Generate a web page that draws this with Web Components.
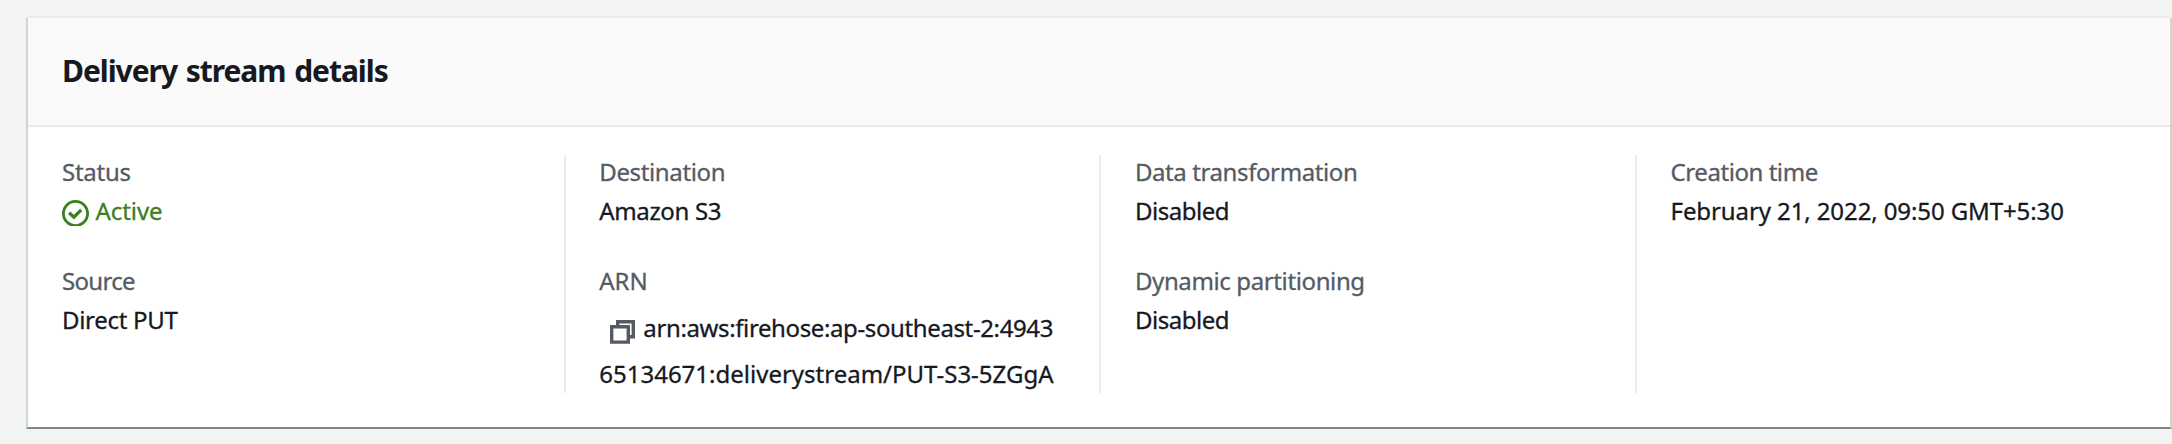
<!DOCTYPE html>
<html lang="en">
<head>
<meta charset="utf-8">
<title>Delivery stream details</title>
<style>
body { margin: 0; height: 444px; overflow: hidden; background: #f2f3f3; font-family: "Noto Sans", sans-serif; color: #16191f; }
</style>
</head>
<body>
<details-panel>
  <span slot="heading">Delivery stream details</span>
  <detail-column>
    <detail-field label="Status" style="--label-ls:-.26px;--value-ls:-.08px"><status-ok>Active</status-ok></detail-field>
    <detail-field label="Source" style="--label-ls:-.7px;--value-ls:-.3px">Direct PUT</detail-field>
  </detail-column>
  <detail-column divided>
    <detail-field label="Destination" style="--label-ls:-.36px;--value-ls:-.35px">Amazon S3</detail-field>
    <detail-field label="ARN"><copy-text first="arn:aws:firehose:ap-southeast-2:4943" rest="65134671:deliverystream/PUT-S3-5ZGgA"></copy-text></detail-field>
  </detail-column>
  <detail-column divided>
    <detail-field label="Data transformation" style="--label-ls:-.4px;--value-ls:-.46px">Disabled</detail-field>
    <detail-field label="Dynamic partitioning" style="--label-ls:-.38px;--value-ls:-.46px">Disabled</detail-field>
  </detail-column>
  <detail-column divided>
    <detail-field label="Creation time" style="--label-ls:-.44px;--value-ls:-.1px">February 21, 2022, 09:50 GMT+5:30</detail-field>
  </detail-column>
</details-panel>
<script>
const define = (name, html, setup) => customElements.define(name, class extends HTMLElement {
  connectedCallback() {
    if (this.shadowRoot) return;
    const root = this.attachShadow({ mode: "open" });
    root.innerHTML = html;
    if (setup) setup(this, root);
  }
});

define("details-panel", `
<style>
:host { display: block; padding: 16px 0 0 26px; }
.top { height: 2px; margin: 0 2px; background: #eaebeb; }
.card { box-sizing: border-box; width: 2146px; height: 411px; border: 2px solid #d0d5d4; border-top: 0; border-bottom-color: #7c8988; background: #fff; }
header { box-sizing: border-box; height: 109px; padding: 0 34px; background: #fafafa; border-bottom: 2px solid #eaeaea; }
h2 { margin: 0; padding-top: 32px; font-size: 30px; line-height: 42px; font-weight: 700; letter-spacing: -1.05px; word-spacing: 2px; }
.grid { display: grid; grid-template-columns: repeat(4, 535.67px); height: 238px; padding-top: 28px; }
</style>
<div class="top"></div>
<section class="card">
  <header><h2><slot name="heading"></slot></h2></header>
  <div class="grid"><slot></slot></div>
</section>`);

define("detail-column", `
<style>
:host { box-sizing: border-box; display: flex; flex-direction: column; gap: 31px; height: 238px; padding-left: 34px; }
:host([divided]) { border-left: 2px solid #eaeaea; padding-left: 33.6px; }
</style><slot></slot>`);

define("detail-field", `
<style>
:host { display: block; font-size: 24px; white-space: nowrap; -webkit-text-stroke: .3px; }
.label { line-height: 33px; color: #545b64; letter-spacing: var(--label-ls, 0); }
.value { line-height: 45px; letter-spacing: var(--value-ls, 0); }
</style>
<div class="label"></div><div class="value"><slot></slot></div>`, (el, root) => {
  root.querySelector(".label").textContent = el.getAttribute("label");
});

define("status-ok", `
<style>
:host { display: flex; color: #3a801f; }
svg { flex: none; margin: 12px 6.5px 0 0; }
</style>
<svg width="27" height="26" viewBox="0 0 27 26" fill="none" stroke="currentColor">
  <circle cx="13.5" cy="13.5" r="12.1" stroke-width="2.8"/>
  <path d="M7.2 12.8l4.7 4.4 7.3-7.3" stroke-width="3.4"/>
</svg><span><slot></slot></span>`);

define("copy-text", `
<style>
:host { display: block; padding-top: 8px; line-height: 46px; }
.row { display: flex; }
svg { flex: none; margin: 15px 8.5px 0 10.6px; }
.first { letter-spacing: -.38px; }
</style>
<div class="row"><svg width="25" height="24" viewBox="0 0 25 24" fill="none" stroke="#545b64" stroke-width="3.4">
  <path d="M7.7 5V1.7H23.3V16.7H19"/><path d="M1.7 6.7H18.3V22.1H1.7Z"/>
</svg><span class="first"></span></div>
<div class="rest"></div>`, (el, root) => {
  root.querySelector(".first").textContent = el.getAttribute("first");
  root.querySelector(".rest").textContent = el.getAttribute("rest");
});
</script>
</body>
</html>
